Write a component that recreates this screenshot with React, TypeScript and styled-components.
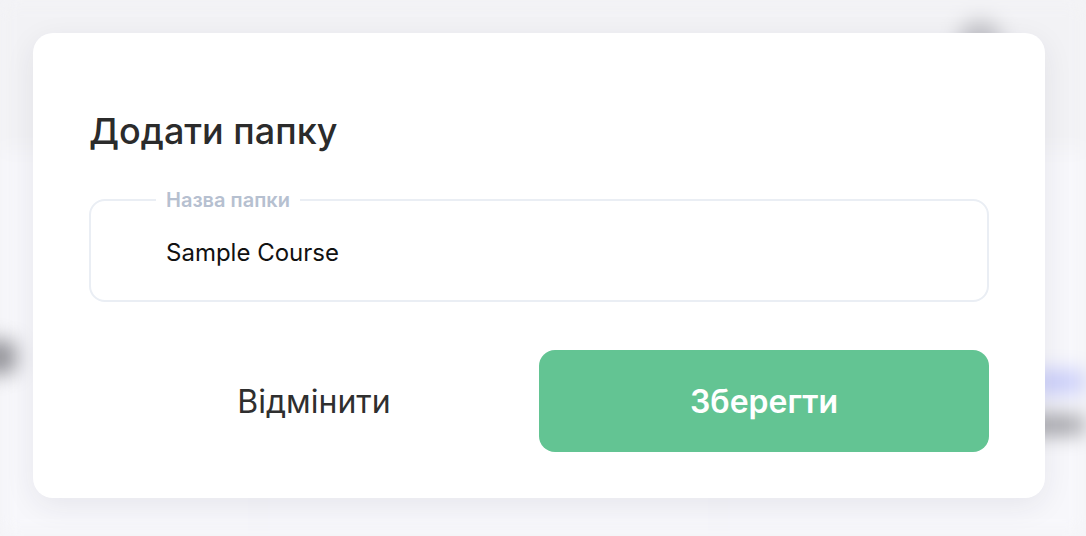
import styled, { createGlobalStyle } from "styled-components";

const GlobalStyle = createGlobalStyle`
  html, body {
    margin: 0;
    padding: 0;
    background: #f4f4f7;
    font-family: Inter, "Noto Sans", "Liberation Sans", sans-serif;
  }
  * { box-sizing: border-box; }
`;

const Page = styled.div`
  width: 1086px;
  height: 536px;
  overflow: hidden;
  position: relative;
  background: #f4f4f7;
`;

// blurred page under the modal
const BlurredPage = styled.div`
  position: absolute;
  inset: 0;
  filter: blur(10px);
  display: grid;
  grid-template-rows: 150px 1fr;
`;

const PageHeader = styled.div`
  background: #f2f2f5;
  display: flex;
  justify-content: flex-end;
  padding: 20px 84px 0 0;
`;

const Avatar = styled.div`
  width: 44px;
  height: 44px;
  border-radius: 50%;
  background: #c4c4c9;
`;

const PageBody = styled.div`
  background: #f7f7fb;
  display: grid;
  grid-template-columns: 260px 460px 1fr;
`;

const PageColumn = styled.div<{ $line?: boolean; $start?: boolean; $top: number }>`
  border-right: ${({ $line }) => ($line ? "2px solid #ececf2" : "none")};
  display: flex;
  flex-direction: column;
  padding-top: ${({ $top }) => $top}px;
  gap: 22px;
  align-items: ${({ $start }) => ($start ? "flex-start" : "flex-end")};
`;

const Blob = styled.div<{ $w: number; $h: number; $c: string; $shift?: number }>`
  width: ${({ $w }) => $w}px;
  height: ${({ $h }) => $h}px;
  background: ${({ $c }) => $c};
  border-radius: 10px;
  margin-left: ${({ $shift }) => $shift ?? 0}px;
`;

const Overlay = styled.div`
  position: absolute;
  inset: 0;
  display: flex;
  align-items: flex-start;
  justify-content: flex-start;
  padding: 33px 0 0 33px;
`;

const Modal = styled.div`
  width: 1012px;
  height: 465px;
  background: #ffffff;
  border-radius: 20px;
  box-shadow: 0 8px 30px rgba(40, 40, 70, 0.08);
  padding: 74px 56px 0 56px;
  display: flex;
  flex-direction: column;
`;

const Title = styled.h2`
  margin: 0;
  font-size: 36px;
  line-height: 48px;
  font-weight: 500;
  color: #2b2b2b;
`;

const Field = styled.fieldset`
  margin: 33px 0 0 0;
  height: 114px;
  border: 2px solid #eaeef4;
  border-radius: 16px;
  padding: 0 0 0 75px;
  display: flex;
  flex-direction: column;
`;

const Legend = styled.legend`
  padding: 0 10px;
  margin-left: -10px;
  font-size: 20px;
  font-weight: 600;
  color: #b6c0d0;
  line-height: 24px;
`;

const Value = styled.input`
  border: none;
  outline: none;
  background: transparent;
  font-family: Inter, "Noto Sans", "Liberation Sans", sans-serif;
  font-size: 24px;
  color: #111;
  padding: 0;
  margin-top: 25px;
  height: 30px;
`;

const Actions = styled.div`
  margin-top: 48px;
  display: grid;
  grid-template-columns: 1fr 1fr;
`;

const Button = styled.button<{ $primary?: boolean }>`
  height: 102px;
  border: none;
  border-radius: 16px;
  font-family: Inter, "Noto Sans", "Liberation Sans", sans-serif;
  font-size: 32px;
  font-weight: ${({ $primary }) => ($primary ? 600 : 400)};
  color: ${({ $primary }) => ($primary ? "#ffffff" : "#2f2f2f")};
  background: ${({ $primary }) => ($primary ? "#63c493" : "transparent")};
  cursor: pointer;
`;

export default function App() {
  return (
    <Page>
      <GlobalStyle />
      <BlurredPage>
        <PageHeader>
          <Avatar />
        </PageHeader>
        <PageBody>
          <PageColumn $line $start $top={190}>
            <Blob $w={34} $h={34} $c="#8f8f95" $shift={-18} />
          </PageColumn>
          <PageColumn $line $top={190} />
          <PageColumn $top={220}>
            <Blob $w={60} $h={24} $c="#c9cdfa" />
            <Blob $w={120} $h={18} $c="#98989e" />
          </PageColumn>
        </PageBody>
      </BlurredPage>
      <Overlay>
        <Modal>
          <Title>Додати папку</Title>
          <Field>
            <Legend>Назва папки</Legend>
            <Value defaultValue="Sample Course" />
          </Field>
          <Actions>
            <Button>Відмінити</Button>
            <Button $primary>Зберегти</Button>
          </Actions>
        </Modal>
      </Overlay>
    </Page>
  );
}
